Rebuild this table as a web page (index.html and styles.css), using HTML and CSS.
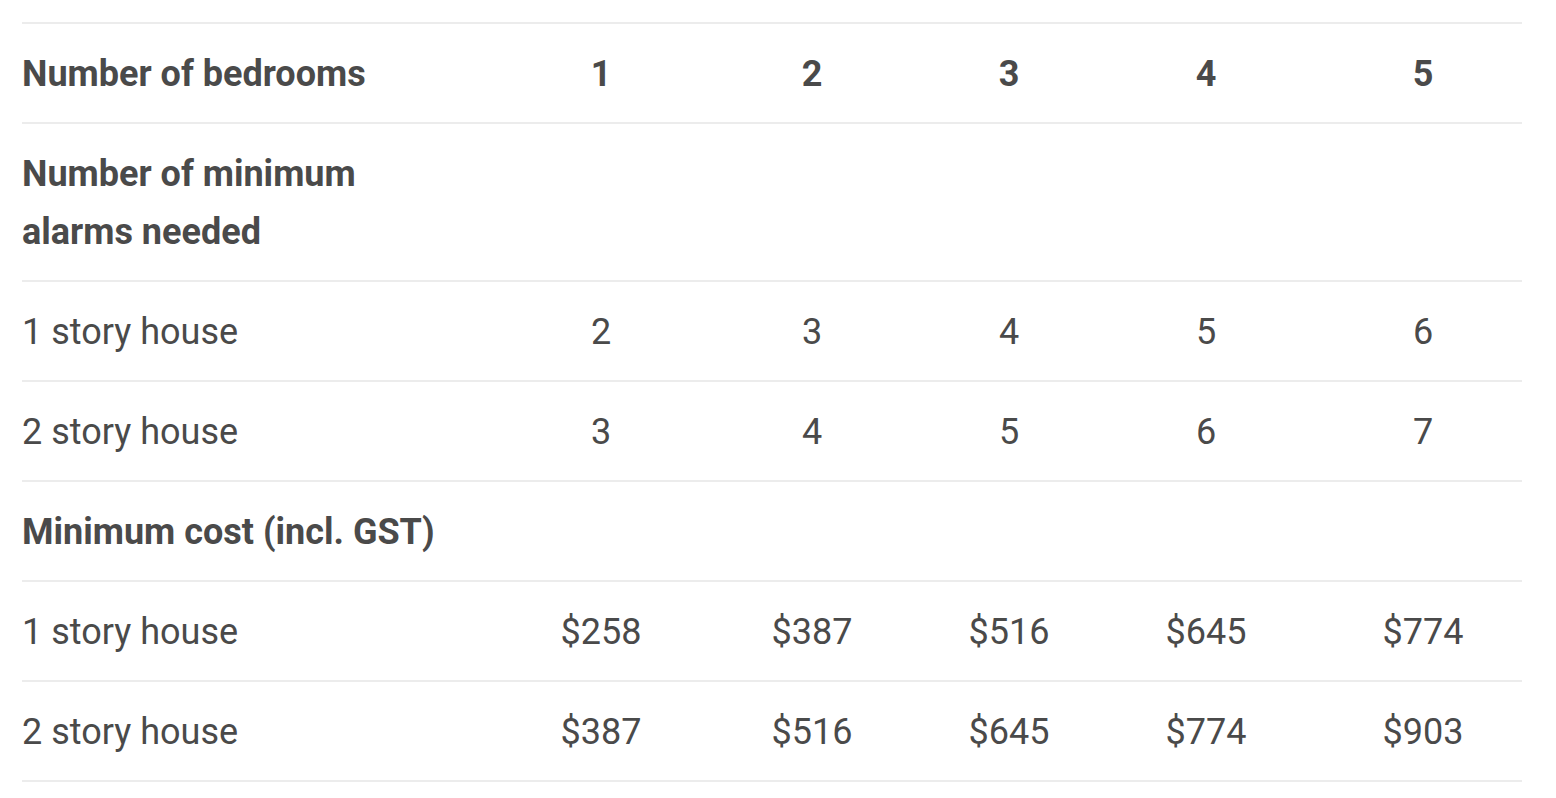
FILE: index.html
```html
<!DOCTYPE html>
<html lang="en">
<head>
<meta charset="utf-8">
<title>Smoke alarm costs</title>
<link rel="stylesheet" href="styles.css">
</head>
<body>
<table class="cost-table">
  <colgroup>
    <col class="c-label">
    <col class="c-1">
    <col class="c-2">
    <col class="c-3">
    <col class="c-4">
    <col class="c-5">
  </colgroup>
  <tbody>
    <tr class="head">
      <td>Number of bedrooms</td>
      <td class="num">1</td>
      <td class="num">2</td>
      <td class="num">3</td>
      <td class="num">4</td>
      <td class="num">5</td>
    </tr>
    <tr class="head">
      <td>Number of minimum<br>alarms needed</td>
      <td></td><td></td><td></td><td></td><td></td>
    </tr>
    <tr>
      <td>1 story house</td>
      <td class="num">2</td>
      <td class="num">3</td>
      <td class="num">4</td>
      <td class="num">5</td>
      <td class="num">6</td>
    </tr>
    <tr>
      <td>2 story house</td>
      <td class="num">3</td>
      <td class="num">4</td>
      <td class="num">5</td>
      <td class="num">6</td>
      <td class="num">7</td>
    </tr>
    <tr class="head">
      <td colspan="3" class="nowrap">Minimum cost (incl. GST)</td>
      <td></td><td></td><td></td>
    </tr>
    <tr>
      <td>1 story house</td>
      <td class="num">$258</td>
      <td class="num">$387</td>
      <td class="num">$516</td>
      <td class="num">$645</td>
      <td class="num">$774</td>
    </tr>
    <tr>
      <td>2 story house</td>
      <td class="num">$387</td>
      <td class="num">$516</td>
      <td class="num">$645</td>
      <td class="num">$774</td>
      <td class="num">$903</td>
    </tr>
  </tbody>
</table>
</body>
</html>
```
FILE: styles.css
```css
html, body {
  margin: 0;
  padding: 0;
  background: #ffffff;
}

body {
  padding: 22px 0 0 22px;
  font-family: Roboto, "Liberation Sans", sans-serif;
  color: #4a4a4a;
}

.cost-table {
  width: 1500px;
  table-layout: fixed;
  border-collapse: collapse;
  font-size: 36px;
  line-height: 58px;
}

.c-label { width: 486px; }
.c-1 { width: 186px; }
.c-2 { width: 236px; }
.c-3 { width: 158px; }
.c-4 { width: 236px; }
.c-5 { width: 198px; }

.cost-table td {
  padding: 21px 0 19px 0;
  border-top: 2px solid #ececec;
  border-bottom: 2px solid #ececec;
  vertical-align: top;
  font-weight: 400;
}

.cost-table .head td {
  font-weight: 700;
}

.cost-table td.num {
  text-align: center;
}

.nowrap {
  white-space: nowrap;
}
```
